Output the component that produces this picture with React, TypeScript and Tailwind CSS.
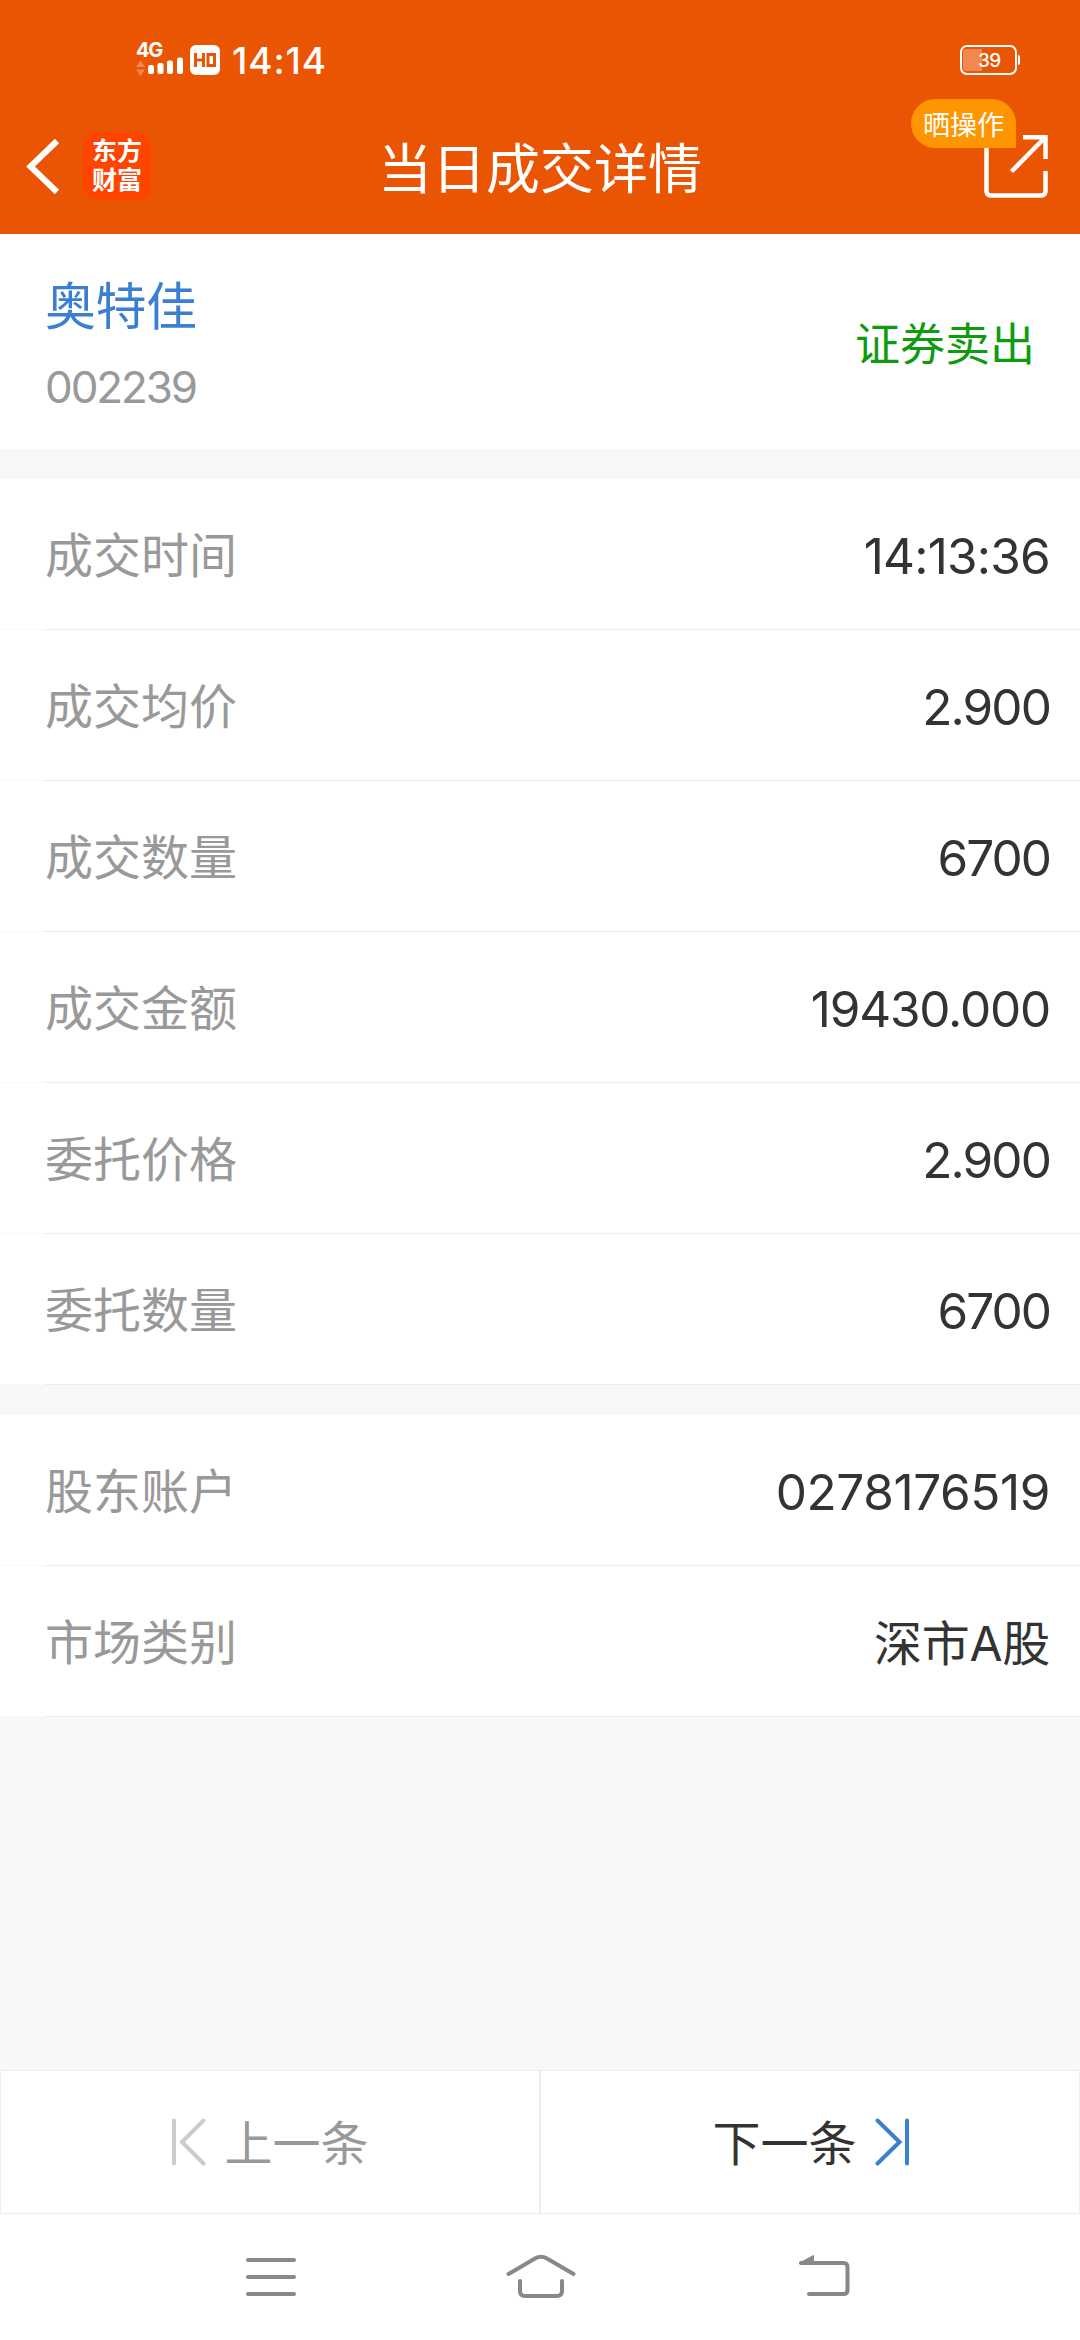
import React from 'react'

type Row = { label: string; value: string; spacing: string }

const tradeRows: Row[] = [
  { label: '成交时间', value: '14:13:36', spacing: 'text-[49.5px] tracking-[-0.8px]' },
  { label: '成交均价', value: '2.900', spacing: 'text-[49.5px] tracking-[-1.9px]' },
  { label: '成交数量', value: '6700', spacing: 'text-[49.5px] tracking-[-2px]' },
  { label: '成交金额', value: '19430.000', spacing: 'text-[49.5px] tracking-[-1.2px]' },
  { label: '委托价格', value: '2.900', spacing: 'text-[49.5px] tracking-[-1.9px]' },
  { label: '委托数量', value: '6700', spacing: 'text-[49.5px] tracking-[-2px]' },
]

const accountRows: Row[] = [
  { label: '股东账户', value: '0278176519', spacing: 'text-[49.5px] tracking-[-0.4px]' },
  { label: '市场类别', value: '深市A股', spacing: 'text-[48px] tracking-[-0.3px]' },
]

function StatusBar() {
  return (
    <div className="flex h-[120px] items-center justify-between pl-[136px] pr-[60px] text-white">
      <div className="flex items-center">
        {/* Signal */}
        <div className="flex h-[36px] w-[48px] flex-col">
          <span className="-mt-[3px] h-[18px] text-[20px] font-bold leading-[23px] tracking-[-1.4px]">4G</span>
          <svg className="h-[21px] w-[48px]" viewBox="0 15 48 21" fill="currentColor">
            <path d="M4.5 18.5 9 25H0zM4.5 34 9 27.5H0z" opacity="0.3" />
            <rect x="12" y="23" width="6" height="9" rx="2" />
            <rect x="21.5" y="21" width="6" height="11" rx="2" />
            <rect x="31" y="18.5" width="6" height="13.5" rx="2" />
            <rect x="41" y="15.5" width="6" height="16.5" rx="2" />
          </svg>
        </div>
        <svg className="ml-[6px] h-[30px] w-[30px]" viewBox="0 0 30 30" fill="none">
          <rect width="30" height="30" rx="6" fill="#fff" />
          <path d="M5.5 8v14M13.5 8v14M5.5 15h8M18 9.5h6.500v11H18z" stroke="#ea5504" strokeWidth="3" />
        </svg>
        <span className="ml-[12px] text-[37px] font-medium leading-none tracking-[0.9px]">14:14</span>
      </div>
      <div className="flex items-center gap-px">
        <div className="relative flex h-[30px] w-[57px] items-center rounded-[7px] border-[2.5px] border-white">
          <div className="ml-px h-[22px] w-[19px] rounded-l-[3px] bg-white/30" />
          <span className="absolute left-[16px] text-[19px] font-medium leading-none tracking-[-0.7px]">39</span>
        </div>
        <div className="h-[10px] w-[2px] rounded-r bg-white" />
      </div>
    </div>
  )
}

function TitleBar() {
  return (
    <div className="flex h-[114px] items-start pl-[26px] text-white">
      <div className="flex w-[352px] pt-[12px]">
        <svg className="mt-[6px] h-[57px] w-[34px]" viewBox="0 0 34 57" fill="none" stroke="currentColor" strokeWidth="6">
          <path d="M31 3 4.5 28.5 31 54" />
        </svg>
        <div className="ml-[23px] flex h-[68px] w-[68px] flex-col items-center justify-center rounded-[15px] bg-[#ff4400] text-[25px] font-bold leading-[29px]">
          <span>东方</span>
          <span>财富</span>
        </div>
      </div>
      <h1 className="shrink-0 whitespace-nowrap pt-[22px] text-[54px] leading-[56px]">当日成交详情</h1>
      <div className="relative mr-[32px] flex flex-1 justify-end pt-[14px]">
        <svg className="h-[65px] w-[65px]" viewBox="0 0 65 65" fill="none" stroke="currentColor" strokeWidth="4.5">
          <path d="M3.5 0v57.500a4 4 0 0 0 4 4h51a4 4 0 0 0 4-4V37" />
          <path d="M40 3.2h22.500V25M62 3.5 28.5 37.5" />
        </svg>
        <span className="absolute right-[32px] top-[-21px] flex h-[49px] w-[105px] items-center justify-center rounded-full rounded-br-none bg-[#ff9500] pt-[3px] text-[27px] leading-none">
          晒操作
        </span>
      </div>
    </div>
  )
}

function DetailList({ rows }: { rows: Row[] }) {
  return (
    <div className="bg-white">
      {rows.map((row, i) => (
        <div key={row.label}>
          <div className="flex h-[150px] items-center justify-between pl-[45px] pr-[30px] pt-[4px] text-[48px] leading-none">
            <span className="text-[#999]">{row.label}</span>
            <span className={`pt-px text-[#333] ${row.spacing}`}>{row.value}</span>
          </div>
          <div className="flex h-px">
            <div className={i === rows.length - 1 ? 'w-[45px] bg-[#f7f8fa]' : 'w-[45px] bg-[#f9f9f9]'} />
            <div className="flex-1 bg-[#ececec]" />
          </div>
        </div>
      ))}
    </div>
  )
}

function Pager() {
  return (
    <div className="flex h-[144px] text-[48px] leading-none">
      <div className="flex w-1/2 items-center justify-center border border-[#ececec] bg-white text-[#999]">
        <svg className="mr-[18px] h-[48px] w-[35px] text-[#ccc]" viewBox="0 0 35 48" fill="none" stroke="currentColor" strokeWidth="4" strokeLinecap="round">
          <path d="M3 2.5v43M32.500 2.5 11 24l21.500 21.500" />
        </svg>
        <span className="pt-[4px]">上一条</span>
      </div>
      <div className="flex w-1/2 items-center justify-center border border-[#ececec] bg-white pl-[2px] text-[#333]">
        <span className="pt-[4px]">下一条</span>
        <svg className="ml-[18px] h-[48px] w-[35px] text-[#3b7fd0]" viewBox="0 0 35 48" fill="none" stroke="currentColor" strokeWidth="4" strokeLinecap="round">
          <path d="M32 2.5v43M2.500 2.500 24.500 24 2.500 45.500" />
        </svg>
      </div>
    </div>
  )
}

function NavBar() {
  return (
    <div className="flex h-[126px] items-start bg-white pl-[245px] pt-[38px] text-[#888]">
      <svg className="h-[50px] w-[52px]" viewBox="0 0 52 50" fill="none" stroke="currentColor" strokeWidth="4" strokeLinecap="round">
        <path d="M3 8h46M3 25h46M3 42h46" />
      </svg>
      <svg className="ml-[208px] h-[50px] w-[72px]" viewBox="0 0 72 50" fill="none" stroke="currentColor" strokeWidth="4" strokeLinecap="round">
        <path d="M3.500 22 30 6.500q6-3.500 12 0L68.500 22" />
        <path d="M15 29v10q0 5 5 5h32q5 0 5-5V29" />
      </svg>
      <svg className="ml-[220px] h-[50px] w-[54px]" viewBox="0 0 54 50" fill="none" stroke="currentColor" strokeWidth="4" strokeLinecap="round">
        <path d="M4 11h42.500q4 0 4 4v23q0 4-4 4H12" />
        <path d="M2.500 11 16.500 3.500V11z" fill="currentColor" strokeWidth="1" />
      </svg>
    </div>
  )
}

export default function App() {
  return (
    <div className="flex h-[2340px] w-[1080px] flex-col overflow-hidden bg-[#f7f8fa] font-['Inter','Noto_Sans_CJK_SC',sans-serif]">
      <header className="bg-[#ea5504]">
        <StatusBar />
        <TitleBar />
      </header>

      {/* Stock */}
      <section className="flex h-[215px] justify-between bg-white pl-[45px] pr-[45px]">
        <div className="flex flex-col">
          <span className="mt-[43px] text-[51px] leading-[60px] tracking-[-0.5px] text-[#3b7fd0]">奥特佳</span>
          <span className="mt-[25px] text-[44px] leading-[50px] tracking-[-2.1px] text-[#999]">002239</span>
        </div>
        <span className="mt-[81px] text-[45px] leading-[60px] text-[#0f9a0f]">证券卖出</span>
      </section>

      <div className="mt-[30px]">
        <DetailList rows={tradeRows} />
      </div>
      <div className="mt-[30px]">
        <DetailList rows={accountRows} />
      </div>

      <footer className="mt-auto">
        <Pager />
        <NavBar />
      </footer>
    </div>
  )
}
